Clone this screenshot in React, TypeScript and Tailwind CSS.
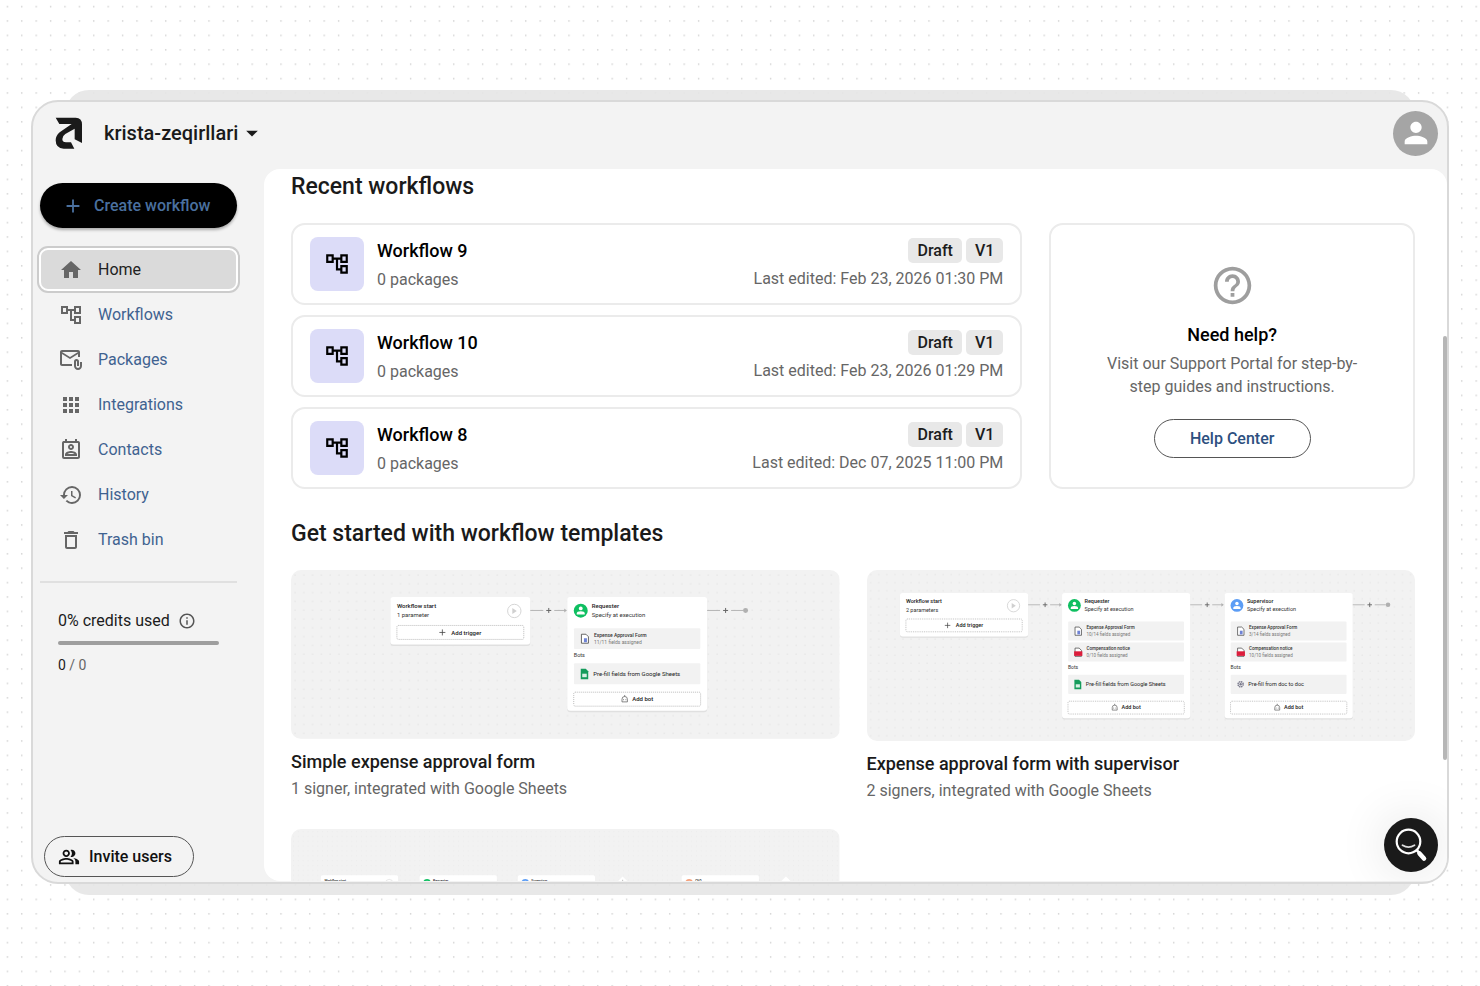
import type { ReactNode } from 'react';
import type { IconType } from 'react-icons';
import {
  MdAdd,
  MdApps,
  MdArrowDropDown,
  MdDeleteOutline,
  MdHelpOutline,
  MdHistory,
  MdHome,
  MdInfoOutline,
  MdOutlineAccountTree,
  MdOutlineAttachEmail,
  MdOutlinePeopleAlt,
  MdOutlinePermContactCalendar,
  MdPerson,
} from 'react-icons/md';

interface NavItem {
  label: string;
  icon: IconType;
  active?: boolean;
}

const navItems: NavItem[] = [
  { label: 'Home', icon: MdHome, active: true },
  { label: 'Workflows', icon: MdOutlineAccountTree },
  { label: 'Packages', icon: MdOutlineAttachEmail },
  { label: 'Integrations', icon: MdApps },
  { label: 'Contacts', icon: MdOutlinePermContactCalendar },
  { label: 'History', icon: MdHistory },
  { label: 'Trash bin', icon: MdDeleteOutline },
];

const workflows = [
  { name: 'Workflow 9', packages: 0, edited: 'Feb 23, 2026 01:30 PM' },
  { name: 'Workflow 10', packages: 0, edited: 'Feb 23, 2026 01:29 PM' },
  { name: 'Workflow 8', packages: 0, edited: 'Dec 07, 2025 11:00 PM' },
];

function Logo() {
  return (
    <svg viewBox="0 0 84 96" className="h-8 w-7" aria-label="Home logo">
      <path
        fill="#1a1a1a"
        d="M2 2H62Q81 3 81 22V78L59 67V35L31 51Q22 57 22 66Q22 76 33 76H48L58 95H26Q2 94 2 70Q2 56 14 46L50 21H13Z"
      />
    </svg>
  );
}

/* Dotted page backdrop */
function DotGrid() {
  return (
    <svg className="absolute inset-0 h-full w-full" aria-hidden="true">
      <defs>
        <pattern id="page-dots" width="14.4" height="14.4" patternUnits="userSpaceOnUse">
          <circle cx="7.4" cy="6.6" r="0.8" fill="#cfcfcf" />
        </pattern>
      </defs>
      <rect width="100%" height="100%" fill="url(#page-dots)" />
    </svg>
  );
}

function Header() {
  return (
    <header className="flex h-[67px] shrink-0 items-center justify-between pr-[9px] pb-[5px] pl-[22px]">
      <div className="flex items-center">
        <Logo />
        <button className="ml-[21px] flex items-center text-xl font-medium text-[#1a1a1a]">
          krista-zeqirllari
          <MdArrowDropDown className="h-7 w-7" />
        </button>
      </div>
      <button
        aria-label="Account"
        className="flex h-[45px] w-[45px] items-center justify-center rounded-full bg-[#a5a5a5] text-white"
      >
        <MdPerson className="h-[34px] w-[34px]" />
      </button>
    </header>
  );
}

function Sidebar() {
  return (
    <aside className="flex w-[231px] shrink-0 flex-col pt-[14px] pb-1">
      <button className="mr-[27px] ml-[7px] flex h-[45px] items-center rounded-full bg-black pl-[22px] text-base font-medium text-[#4a709f] shadow-[0_2px_3px_rgba(0,0,0,0.3)]">
        <MdAdd className="mr-[10px] h-[22px] w-[22px]" />
        Create workflow
      </button>

      <nav className="mt-[19px] mr-[26px] ml-[6px]">
        {navItems.map(({ label, icon: Icon, active }) => (
          <a
            key={label}
            href="#"
            className={
              active
                ? 'my-px flex h-[43px] items-center rounded-[9px] border-2 border-white bg-[#dadada] pl-[18px] text-base text-[#222222] ring-2 ring-[#cccccc]'
                : 'flex h-[45px] items-center pl-5 text-base text-[#3f6290]'
            }
          >
            <Icon className="mr-[15px] h-6 w-6 text-[#666666]" />
            {label}
          </a>
        ))}
      </nav>

      <hr className="mt-[19px] mr-[27px] ml-[7px] border-t-2 border-[#e0e0e0]" />

      <section className="mt-[26px] mr-[45px] ml-[25px]">
        <div className="flex h-6 items-center text-base text-[#1c1c1c]">
          0% credits used
          <MdInfoOutline className="ml-2 h-[18px] w-[18px] text-[#555555]" />
        </div>
        <div className="mt-2 h-1 rounded-full bg-[#9e9e9e]" />
        <p className="mt-2 text-sm leading-6 text-[#666666]">
          <span className="text-[#1c1c1c]">0</span> / 0
        </p>
      </section>

      <button className="mt-auto ml-[11px] flex h-[41px] w-[150px] items-center rounded-full border border-[#555555] pl-[13px] text-base font-medium text-[#111111]">
        <MdOutlinePeopleAlt className="mr-[9px] h-[22px] w-[22px]" />
        Invite users
      </button>
    </aside>
  );
}

function Chip({ children }: { children: ReactNode }) {
  return (
    <span className="rounded-[5px] bg-[#e8e8e8] px-[9px] text-base leading-[25px] font-medium text-[#1c1c1c]">
      {children}
    </span>
  );
}

function RecentWorkflows() {
  return (
    <div className="flex flex-col gap-[10px]">
      {workflows.map((w) => (
        <article key={w.name} className="flex h-[82px] items-center rounded-[14px] border-2 border-[#ebebeb] px-[17px]">
          <div className="flex h-[54px] w-[54px] items-center justify-center rounded-lg bg-[#dcdcf8]">
            <MdOutlineAccountTree className="h-[26px] w-[26px] text-black" />
          </div>
          <div className="ml-[13px] flex flex-1 items-center justify-between">
            <div className="pt-[2px]">
              <h3 className="text-lg leading-[29px] font-medium text-black">{w.name}</h3>
              <p className="text-base leading-[29px] text-[#666666]">{w.packages} packages</p>
            </div>
            <div className="flex flex-col items-end pt-1">
              <div className="flex gap-1">
                <Chip>Draft</Chip>
                <Chip>V1</Chip>
              </div>
              <p className="text-base leading-[31px] text-[#666666]">Last edited: {w.edited}</p>
            </div>
          </div>
        </article>
      ))}
    </div>
  );
}

function HelpCard() {
  return (
    <section className="flex flex-col items-center rounded-[14px] border-2 border-[#ebebeb] pt-[38px] text-center">
      <MdHelpOutline className="h-[45px] w-[45px] text-[#9e9e9e]" />
      <h3 className="mt-[13px] text-lg leading-[28px] font-medium text-black">Need help?</h3>
      <p className="mt-[3px] max-w-[260px] text-base leading-[23px] text-[#666666]">
        Visit our Support Portal for step-by-step guides and instructions.
      </p>
      <a
        href="#"
        className="mt-[21px] flex h-[39px] w-[157px] items-center justify-center rounded-full border border-[#555555] text-base font-medium text-[#2d5080]"
      >
        Help Center
      </a>
    </section>
  );
}

/* ---- Template thumbnails: small flow diagrams ---- */

interface NodeDoc {
  name: string;
  fields: string;
  pdf?: boolean;
}

function StartNode({ x, y, params }: { x: number; y: number; params: string }) {
  return (
    <g transform={`translate(${x} ${y})`}>
      <rect y="1" width="140" height="48" rx="3" fill="#e0e0e0" />
      <rect width="140" height="47.5" rx="3" fill="#fff" />
      <text x="6.5" y="11.5" fontSize="6" fontWeight="500" fill="#222">Workflow start</text>
      <text x="6.5" y="20.5" fontSize="6" fill="#333">{params}</text>
      <circle cx="124" cy="14" r="6.7" fill="none" stroke="#d5d5d5" />
      <path d="M122 11v6l4.5-3z" fill="#d0d0d0" />
      <rect x="6.5" y="28.5" width="127" height="14" rx="1.5" fill="none" stroke="#aaa" strokeDasharray="1 1" strokeWidth="0.8" />
      <path d="M49 35.5h6M52 32.5v6" stroke="#444" strokeWidth="0.8" />
      <text x="61" y="37.7" fontSize="6" fontWeight="500" fill="#222">Add trigger</text>
    </g>
  );
}

function Connector({ x, y, end }: { x: number; y: number; end?: boolean }) {
  return (
    <g transform={`translate(${x} ${y})`} stroke="#b5b5b5" strokeWidth="1" fill="none">
      <path d="M0 0h13M24 0h12" />
      <path d="M16 0h5M18.5 -2.5v5" stroke="#666" />
      {end ? (
        <circle cx="38.5" cy="0" r="2.5" fill="#b0b0b0" stroke="none" />
      ) : (
        <path d="M34 -2l2.5 2l-2.5 2z" fill="#b0b0b0" stroke="none" />
      )}
    </g>
  );
}

function Avatar({ color }: { color: string }) {
  return (
    <>
      <circle cx="13.5" cy="13.7" r="7" fill={color} />
      <circle cx="13.5" cy="11.5" r="1.9" fill="#fff" />
      <path d="M9.5 17.5v-1q0-2.2 4-2.2t4 2.2v1z" fill="#fff" />
    </>
  );
}

interface SignerNodeProps {
  x: number;
  y: number;
  role: string;
  color: string;
  docs: NodeDoc[];
  bot: string;
  sheets?: boolean;
}

function SignerNode({ x, y, role, color, docs, bot, sheets }: SignerNodeProps) {
  const botsY = 31.3 + docs.length * 23;
  return (
    <g transform={`translate(${x} ${y})`}>
      <rect y="1" width="140" height={botsY + 60} rx="3" fill="#e0e0e0" />
      <rect width="140" height={botsY + 59.5} rx="3" fill="#fff" />
      <Avatar color={color} />
      <text x="24.5" y="11.5" fontSize="6" fontWeight="500" fill="#222">{role}</text>
      <text x="24.5" y="20" fontSize="6" fill="#333">Specify at execution</text>
      {docs.map((doc, i) => (
        <g key={doc.name} transform={`translate(6.7 ${31.3 + i * 23})`}>
          <rect width="126.5" height="20.7" rx="1" fill="#f2f2f2" />
          <path d="M7.5 6h4.5l2.5 2.5v6.500h-7z" fill="#fff" stroke="#444" strokeWidth="0.8" />
          {doc.pdf ? (
            <rect x="6.5" y="9.5" width="9" height="5" fill="#dc1d3c" />
          ) : (
            <rect x="10" y="10" width="3" height="4" fill="#6f83d6" />
          )}
          <text x="20" y="8.3" fontSize="5" fontWeight="500" fill="#333">{doc.name}</text>
          <text x="20" y="15.9" fontSize="5" fill="#777">{doc.fields}</text>
        </g>
      ))}
      <text x="6.5" y={botsY + 6} fontSize="5.5" fill="#333">Bots</text>
      <rect x="6.7" y={botsY + 12} width="126.5" height="21" rx="1" fill="#f2f2f2" />
      <g transform={`translate(13 ${botsY + 17.5})`}>
        {sheets ? (
          <>
            <path d="M0.5 0h5l2.5 2.5v8h-7.5z" fill="#159c5b" />
            <rect x="2" y="5" width="4.5" height="3.5" fill="#d8f0e4" />
          </>
        ) : (
          <>
            <circle cx="4.5" cy="5" r="2.8" fill="none" stroke="#77778a" strokeWidth="1.5" strokeDasharray="1.6 0.6" />
            <circle cx="4.5" cy="5" r="1.3" fill="#77778a" />
          </>
        )}
      </g>
      <text x="26" y={botsY + 24.5} fontSize="6" fill="#222">{bot}</text>
      <rect x="6.5" y={botsY + 41} width="127" height="14" rx="1.5" fill="none" stroke="#aaa" strokeDasharray="1 1" strokeWidth="0.8" />
      {/* Robot head */}
      <g transform={`translate(57.5 ${botsY + 48})`} fill="none" stroke="#555" strokeWidth="0.7">
        <path d="M-2.7 2.7v-2.7a2.7 2.7 0 0 1 5.4 0v2.7zM0 -2.7v-1.5" />
        <path d="M-1.2 0v1M1.2 0v1" />
      </g>
      <text x="65" y={botsY + 50} fontSize="6" fontWeight="500" fill="#222">Add bot</text>
    </g>
  );
}

/* Collapsed node: only the head row */
function CompactNode({ x, y, label, color }: { x: number; y: number; label: string; color?: string }) {
  return (
    <g transform={`translate(${x} ${y})`}>
      <rect width="140" height="47.5" rx="3" fill="#fff" />
      {color ? <Avatar color={color} /> : <circle cx="124" cy="14" r="6.7" fill="none" stroke="#d5d5d5" />}
      <text x={color ? 24.5 : 6.5} y="11.5" fontSize="6" fontWeight="500" fill="#222">{label}</text>
    </g>
  );
}

function Thumbnail({ id, width, height, children }: { id: string; width: number; height: number; children: ReactNode }) {
  return (
    <svg viewBox={`0 0 ${width} ${height}`} className="block w-full rounded-[10px]">
      <defs>
        <pattern id={id} width="8.8" height="8.8" patternUnits="userSpaceOnUse">
          <circle cx="4" cy="5" r="0.5" fill="#d4d4d4" />
        </pattern>
      </defs>
      <rect width={width} height={height} fill="#f2f2f2" />
      <rect width={width} height={height} fill={`url(#${id})`} />
      {children}
    </svg>
  );
}

const GREEN = '#0fbf61';
const BLUE = '#5c9df5';
const ORANGE = '#f5a07a';

function SimpleExpenseFlow() {
  return (
    <Thumbnail id="dots-simple" width={549} height={169}>
      <StartNode x={99.5} y={27} params="1 parameter" />
      <Connector x={239.5} y={40.5} />
      <SignerNode
        x={276.5}
        y={27}
        role="Requester"
        color={GREEN}
        docs={[{ name: 'Expense Approval Form', fields: '11/11 fields assigned' }]}
        bot="Pre-fill fields from Google Sheets"
        sheets
      />
      <Connector x={416.5} y={40.5} end />
    </Thumbnail>
  );
}

function SupervisorFlow() {
  return (
    <Thumbnail id="dots-supervisor" width={599} height={187}>
      <StartNode x={36} y={25} params="2 parameters" />
      <Connector x={176} y={38} />
      <SignerNode
        x={213}
        y={25}
        role="Requester"
        color={GREEN}
        docs={[
          { name: 'Expense Approval Form', fields: '10/14 fields assigned' },
          { name: 'Compensation notice', fields: '0/10 fields assigned', pdf: true },
        ]}
        bot="Pre-fill fields from Google Sheets"
        sheets
      />
      <Connector x={353} y={38} />
      <SignerNode
        x={390.5}
        y={25}
        role="Supervisor"
        color={BLUE}
        docs={[
          { name: 'Expense Approval Form', fields: '3/14 fields assigned' },
          { name: 'Compensation notice', fields: '10/10 fields assigned', pdf: true },
        ]}
        bot="Pre-fill from doc to doc"
      />
      <Connector x={530.5} y={38} end />
    </Thumbnail>
  );
}

function ConditionalFlow() {
  return (
    <Thumbnail id="dots-conditional" width={994} height={300}>
      <CompactNode x={54} y={84} label="Workflow start" />
      <CompactNode x={233} y={84} label="Requester" color={GREEN} />
      <CompactNode x={411} y={84} label="Supervisor" color={BLUE} />
      <path d="M601 86l14 14l-14 14l-14 -14z" fill="#fff" />
      <path d="M601 92v6" stroke="#888" />
      <CompactNode x={708} y={84} label="CFO" color={ORANGE} />
      <path d="M897 86l14 14l-14 14l-14 -14z" fill="#fff" />
    </Thumbnail>
  );
}

const templates = [
  { title: 'Simple expense approval form', text: '1 signer, integrated with Google Sheets', Flow: SimpleExpenseFlow },
  { title: 'Expense approval form with supervisor', text: '2 signers, integrated with Google Sheets', Flow: SupervisorFlow },
];

function Templates() {
  return (
    <div className="mt-[18px] grid grid-cols-2 gap-x-[27px] gap-y-[25px]">
      {templates.map(({ title, text, Flow }) => (
        <article key={title}>
          <Flow />
          <h3 className="mt-2 text-lg leading-[29px] font-medium text-[#1a1a1a]">{title}</h3>
          <p className="text-base leading-[26px] text-[#666666]">{text}</p>
        </article>
      ))}
      <article>
        <ConditionalFlow />
      </article>
    </div>
  );
}

/* Floating search helper */
function SearchBubble() {
  return (
    <button
      aria-label="Search help"
      className="absolute right-[9px] bottom-[10px] h-[54px] w-[54px] rounded-full bg-[#1a1a1a] shadow-[0_0_50px_rgba(0,0,0,0.12)]"
    >
      <svg viewBox="0 0 54 54" fill="none" stroke="#fff" strokeLinecap="round">
        <circle cx="24.5" cy="23.5" r="11.8" strokeWidth="2.2" />
        <path d="M18.5 27.3q6 3.6 12 0" strokeWidth="1.8" stroke="#ddd" />
        <path d="M33 32.500l2 2" strokeWidth="2.5" />
        <path d="M35.5 35.5l4.5 5" strokeWidth="4.6" />
      </svg>
    </button>
  );
}

export default function App() {
  return (
    <div className="relative flex h-screen flex-col bg-white pt-[90px] pb-[91px] font-['Roboto',sans-serif]">
      <DotGrid />
      <div className="relative mx-[65px] flex min-h-0 flex-1 flex-col rounded-3xl bg-[#e6e6e6]/90 pt-[10px] pb-[11px]">
        <div className="relative -mx-[34px] flex min-h-0 flex-1 flex-col overflow-hidden rounded-[27px] border-2 border-[#d9d9d9] bg-[#f3f3f3]">
          <Header />
          <div className="flex min-h-0 flex-1 pb-px">
            <Sidebar />
            <div className="flex min-w-0 flex-1 overflow-hidden rounded-2xl bg-white">
              <main className="min-w-0 flex-1 overflow-hidden pr-7 pl-[27px]">
                <h2 className="text-[23px] leading-[36px] font-medium text-[#1a1a1a]">Recent workflows</h2>
                <div className="mt-[18px] grid grid-cols-[2fr_1fr] gap-[27px]">
                  <RecentWorkflows />
                  <HelpCard />
                </div>
                <h2 className="mt-[27px] text-[23px] leading-[36px] font-medium text-[#1a1a1a]">
                  Get started with workflow templates
                </h2>
                <Templates />
              </main>
              {/* Scrollbar */}
              <div className="flex w-1 flex-col">
                <div className="flex-[167]" />
                <div className="flex-[425] rounded-full bg-[#b6b6b6]" />
                <div className="flex-[121]" />
              </div>
            </div>
          </div>
          <SearchBubble />
        </div>
      </div>
    </div>
  );
}
